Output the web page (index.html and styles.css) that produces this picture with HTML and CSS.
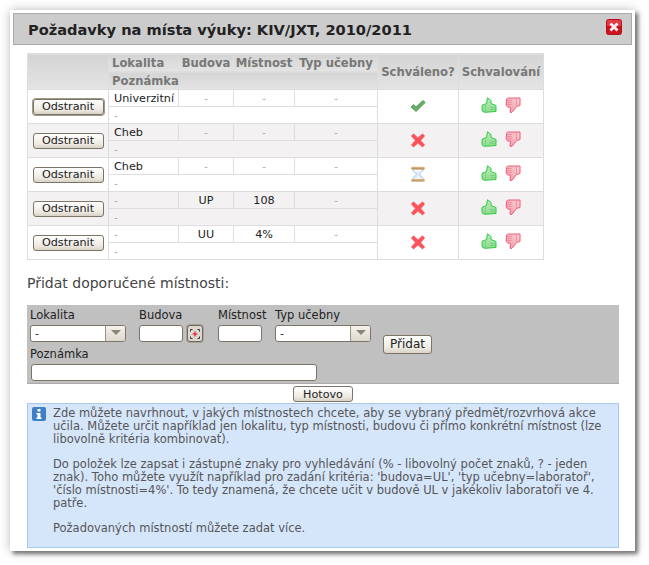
FILE: index.html
```html
<!DOCTYPE html>
<html lang="cs">
<head>
<meta charset="utf-8">
<title>Požadavky na místa výuky</title>
<link rel="stylesheet" href="styles.css">
</head>
<body>
<svg class="defs" width="0" height="0" aria-hidden="true">
  <defs>
    <linearGradient id="gUp" x1="0" y1="0" x2="0" y2="1"><stop offset="0" stop-color="#bfe8bf"/><stop offset="1" stop-color="#8edb8e"/></linearGradient>
    <linearGradient id="gDown" x1="1" y1="0" x2="0" y2="1"><stop offset="0" stop-color="#f8d0d4"/><stop offset="1" stop-color="#f29aa8"/></linearGradient>
    <linearGradient id="gSand" x1="0" y1="0" x2="0" y2="1"><stop offset="0" stop-color="#e6bd88"/><stop offset="1" stop-color="#b4834a"/></linearGradient>
    <symbol id="up" viewBox="0 0 16 16">
      <path d="M1 9Q1 7.500 3 7.500L5.500 6.500 6.500 .8 10 3.500V6.500L15 8.500V14.500L4 15.300Q1 15 1 13z" fill="url(#gUp)" stroke="#2fcc40" stroke-linejoin="round"/>
      <path d="M4.500 8V14.500M9 10.500h6M9 12.500h6" stroke="#5fd06a" stroke-width=".7" fill="none"/>
    </symbol>
    <symbol id="down" viewBox="0 0 16 16">
      <path d="M1.200 8.500L1.500 2.500Q1.700 1 3.500 1H15V8.500L11.500 9.500 7 15.300H5L5.500 10.300 2.500 9.800z" fill="url(#gDown)" stroke="#f4587a" stroke-linejoin="round"/>
      <path d="M11.500 1.500V9M1.800 3.500h5M1.600 5.500h5M1.500 7.500h5" stroke="#f07c90" stroke-width=".7" fill="none"/>
    </symbol>
    <symbol id="no" viewBox="0 0 16 16">
      <path d="M3.500 1.500L8 5.500 12.500 1.500 15 4 11 8.500 15 13 12.500 15.200 8 11.500 3.500 15.200 1 13 5 8.500 1 4z" fill="#f9525a" stroke="#fb9da0" stroke-width=".5"/>
    </symbol>
    <symbol id="yes" viewBox="0 0 16 16">
      <path d="M1 9L3.500 6.500 6 9 13 2.500 15.200 4.500 6 13.500z" fill="#68b068" stroke="#478c47" stroke-width=".8" stroke-linejoin="round"/>
    </symbol>
    <symbol id="wait" viewBox="0 0 16 16">
      <path d="M2.500 2.500h11C13.500 6 9.500 6.500 9.500 8.300s4 2.200 4 5.500h-11C2.500 10.500 6.500 10 6.500 8.300S2.500 6 2.500 2.500z" fill="#e4effb" stroke="#90b6e0" stroke-width=".8"/>
      <path d="M5 4.500h6M6.800 12h2.400" stroke="#fff" stroke-width="1.500"/>
      <rect x="1.200" y=".8" width="13.600" height="2.600" rx="1.200" fill="url(#gSand)"/>
      <rect x="1.200" y="13" width="13.600" height="2.600" rx="1.200" fill="url(#gSand)"/>
    </symbol>
  </defs>
</svg>

<main class="dialog">
  <header class="titlebar">
    <h1 class="title">Požadavky na místa výuky: KIV/JXT, 2010/2011</h1>
    <svg class="close" viewBox="0 0 16 16" width="16" height="16" role="img" aria-label="Zavřít">
      <rect x=".5" y=".5" width="15" height="15" rx="2" fill="#d0121f" stroke="#b01018"/>
      <rect x="1" y="1" width="14" height="6" rx="1" fill="#ee5560" opacity=".6"/>
      <path d="M4.500 4.500l7 7M11.500 4.500l-7 7" stroke="#f6f0f0" stroke-width="2.800"/>
    </svg>
  </header>

  <div class="content">
    <table class="grid">
      <colgroup><col class="c1"><col class="c2"><col class="c3"><col class="c4"><col class="c5"><col class="c6"><col class="c7"></colgroup>
      <thead>
        <tr>
          <th rowspan="2"></th>
          <th class="left">Lokalita</th><th>Budova</th><th>Místnost</th><th>Typ učebny</th>
          <th rowspan="2">Schváleno?</th><th rowspan="2">Schvalování</th>
        </tr>
        <tr><th class="left" colspan="4">Poznámka</th></tr>
      </thead>
      <tbody>
        <tr>
          <td rowspan="2" class="action"><button class="btn focused">Odstranit</button></td>
          <td class="left">Univerzitní</td><td class="nil">-</td><td class="nil">-</td><td class="nil">-</td>
          <td rowspan="2" class="state"><svg class="ic"><use href="#yes"/></svg></td>
          <td rowspan="2" class="vote"><svg class="ic"><use href="#up"/></svg><svg class="ic"><use href="#down"/></svg></td>
        </tr>
        <tr><td colspan="4" class="left nil">-</td></tr>
        <tr class="alt">
          <td rowspan="2" class="action"><button class="btn">Odstranit</button></td>
          <td class="left">Cheb</td><td class="nil">-</td><td class="nil">-</td><td class="nil">-</td>
          <td rowspan="2" class="state"><svg class="ic"><use href="#no"/></svg></td>
          <td rowspan="2" class="vote"><svg class="ic"><use href="#up"/></svg><svg class="ic"><use href="#down"/></svg></td>
        </tr>
        <tr class="alt"><td colspan="4" class="left nil">-</td></tr>
        <tr>
          <td rowspan="2" class="action"><button class="btn">Odstranit</button></td>
          <td class="left">Cheb</td><td class="nil">-</td><td class="nil">-</td><td class="nil">-</td>
          <td rowspan="2" class="state"><svg class="ic"><use href="#wait"/></svg></td>
          <td rowspan="2" class="vote"><svg class="ic"><use href="#up"/></svg><svg class="ic"><use href="#down"/></svg></td>
        </tr>
        <tr><td colspan="4" class="left nil">-</td></tr>
        <tr class="alt">
          <td rowspan="2" class="action"><button class="btn">Odstranit</button></td>
          <td class="left nil">-</td><td>UP</td><td>108</td><td class="nil">-</td>
          <td rowspan="2" class="state"><svg class="ic"><use href="#no"/></svg></td>
          <td rowspan="2" class="vote"><svg class="ic"><use href="#up"/></svg><svg class="ic"><use href="#down"/></svg></td>
        </tr>
        <tr class="alt"><td colspan="4" class="left nil">-</td></tr>
        <tr>
          <td rowspan="2" class="action"><button class="btn">Odstranit</button></td>
          <td class="left nil">-</td><td>UU</td><td>4%</td><td class="nil">-</td>
          <td rowspan="2" class="state"><svg class="ic"><use href="#no"/></svg></td>
          <td rowspan="2" class="vote"><svg class="ic"><use href="#up"/></svg><svg class="ic"><use href="#down"/></svg></td>
        </tr>
        <tr><td colspan="4" class="left nil">-</td></tr>
      </tbody>
    </table>

    <h2 class="subtitle">Přidat doporučené místnosti:</h2>

    <form class="addform">
      <div class="fields">
        <div class="field f-loc">
          <label>Lokalita</label>
          <div class="combo w-loc"><span class="combo-val">-</span><span class="combo-btn"></span></div>
        </div>
        <div class="field f-bud">
          <label>Budova</label>
          <div class="with-pick">
            <div class="input w-short"></div>
            <span class="pick"><svg viewBox="0 0 14 14" width="14" height="14"><path d="M2.500 4.500V2.500H4.500M9.500 2.500h2v2M11.500 9.500v2h-2M4.500 11.500h-2v-2" fill="none" stroke="#333"/><path d="M7 4.500v5M4.500 7h5" stroke="#e01020" stroke-width="1.200"/></svg></span>
          </div>
        </div>
        <div class="field f-room">
          <label>Místnost</label>
          <div class="input w-short"></div>
        </div>
        <div class="field f-type">
          <label>Typ učebny</label>
          <div class="combo w-type"><span class="combo-val">-</span><span class="combo-btn"></span></div>
        </div>
        <button type="button" class="btn add">Přidat</button>
      </div>
      <div class="field f-note">
        <label>Poznámka</label>
        <div class="input w-note"></div>
      </div>
    </form>

    <div class="done"><button class="btn done-btn">Hotovo</button></div>

    <section class="info">
      <svg class="info-ic" viewBox="0 0 14 14" width="14" height="14" aria-hidden="true">
        <rect width="14" height="14" rx="2" fill="#3f80c4"/>
        <rect x="5.500" y="2" width="3" height="2.500" fill="#fff"/>
        <path d="M4.500 6H8.500V10.500H9.500V12H4.500V10.500H5.500V7.500H4.500z" fill="#fff"/>
      </svg>
      <div class="info-text">
        <p>Zde můžete navrhnout, v jakých místnostech chcete, aby se vybraný předmět/rozvrhová akce<br>učila. Můžete určit například jen lokalitu, typ místnosti, budovu či přímo konkrétní místnost (lze<br>libovolně kritéria kombinovat).</p>
        <p>Do položek lze zapsat i zástupné znaky pro vyhledávání (% - libovolný počet znaků, ? - jeden<br>znak). Toho můžete využít například pro zadání kritéria: 'budova=UL', 'typ učebny=laboratoř',<br>'číslo místnosti=4%'. To tedy znamená, že chcete učit v budově UL v jakékoliv laboratoři ve 4.<br>patře.</p>
        <p>Požadovaných místností můžete zadat více.</p>
      </div>
    </section>
  </div>
</main>
</body>
</html>
```
FILE: styles.css
```css
* { box-sizing: border-box; }
html, body { margin: 0; padding: 0; background: #fff; }
body {
  width: 649px;
  height: 565px;
  overflow: hidden;
  padding: 10px 0 0 10px;
  font-family: "DejaVu Sans", Verdana, sans-serif;
  font-size: 11px;
  color: #222;
}
.defs { position: absolute; }

.dialog {
  width: 625px;
  height: 541px;
  padding: 3px;
  background: #fff;
  box-shadow: 3px 3px 4px #777, 0 0 10px rgba(0, 0, 0, .25);
}
.titlebar {
  height: 32px;
  display: flex;
  align-items: center;
  justify-content: space-between;
  padding: 1px 0 0 14px;
  background: #ccc;
  border: 1px solid #aaa;
}
.title { margin: 0; font-size: 14.600px; font-weight: bold; color: #222; }
.close { margin: -5px 9px 0 0; }

.content { padding: 8px 13px 0 14px; }

.grid {
  width: 516px;
  table-layout: fixed;
  border-collapse: collapse;
  font-size: 11.200px;
}
.c1 { width: 81px; }
.c2 { width: 70px; }
.c3 { width: 55px; }
.c4 { width: 61px; }
.c5 { width: 83px; }
.c6 { width: 81px; }
.c7 { width: 85px; }
.grid th, .grid td {
  border: 1px solid #ddd;
  padding: 0 3px;
  height: 17px;
  line-height: 14px;
  text-align: center;
  white-space: nowrap;
  overflow: hidden;
}
.grid td { padding: 1px 3px 0; }
.grid th {
  height: 18px;
  background: linear-gradient(#d4d4d4, #e4e4e4);
  color: #777;
  font-weight: bold;
  font-size: 11.600px;
  padding: 0 1px;
}
.grid th.left { text-align: left; padding-left: 3px; }
.grid td.left { text-align: left; padding-left: 5px; }
.grid .nil { color: #aaa; font-size: 10px; }
.alt td { background: #f3f1f2; }
.grid td.action { padding: 0; }
.grid td.state, .grid td.vote { padding: 0; }
.ic { width: 16px; height: 16px; display: inline-block; vertical-align: middle; }
.state .ic { margin-bottom: 1px; }
.vote .ic { margin-bottom: 4px; }
.vote .ic + .ic { margin-left: 8px; }

.btn {
  font-family: inherit;
  font-size: 11.200px;
  color: #222;
  height: 16px;
  padding: 0 9px;
  line-height: 13px;
  border: 1px solid #7d7468;
  border-radius: 3px;
  background: linear-gradient(#fff, #eeeae2 70%, #d8d2c6);
}
.action .btn { width: 71px; display: block; margin: 0 auto; padding: 0; }
.btn.focused { box-shadow: 0 0 0 1px #a09888; }

.subtitle {
  margin: 15px 0 13px;
  font-size: 14px;
  line-height: 17px;
  font-weight: normal;
  color: #444;
}

.addform {
  width: 592px;
  height: 79px;
  background: silver;
  padding: 3px;
  border-bottom: 1px solid #aaa;
}
.fields { display: flex; align-items: flex-start; }
.field label { display: block; height: 14px; line-height: 14px; margin-bottom: 3px; color: #222; font-size: 11.500px; }
.f-note { margin-top: 5px; }
.f-loc { width: 109px; }
.f-bud { width: 79px; }
.f-room { width: 57px; }
.f-type { width: 108px; }
.with-pick { display: flex; align-items: center; gap: 4px; }

.input, .combo {
  height: 17px;
  background: #fff;
  border: 1px solid #7d7468;
  border-radius: 3px;
}
.w-short { width: 44px; }
.w-note { width: 286px; margin-left: 1px; }
.w-loc { width: 96px; }
.w-type { width: 96px; }
.combo { display: flex; align-items: stretch; overflow: hidden; }
.combo-val { flex: 1; padding-left: 4px; line-height: 15px; }
.combo-btn {
  width: 20px;
  border-left: 1px solid #9a9488;
  background: linear-gradient(#f4f2ec, #dcd8ce);
  display: flex;
  align-items: center;
  justify-content: center;
}
.combo-btn::before {
  content: "";
  width: 0;
  height: 0;
  margin-top: -2px;
  border-left: 5px solid transparent;
  border-right: 5px solid transparent;
  border-top: 5px solid #8a8478;
}
.pick {
  width: 16px;
  height: 17px;
  display: flex;
  align-items: center;
  justify-content: center;
  background: #dcd8d0;
  border: 1px solid #6f675c;
  border-radius: 3px;
  box-shadow: 0 0 0 1px #a8a49c;
}
.add { height: 19px; margin: 27px 0 -12px; width: 49px; padding: 0; font-size: 12px; }

.done { display: flex; justify-content: center; width: 592px; padding: 2px 0 1px; }
.done-btn { width: 60px; padding: 0; }

.info {
  width: 592px;
  height: 145px;
  display: flex;
  background: #d5e6fb;
  border: 1px solid #a8c8ec;
  padding: 3px 4px 0 4px;
  color: #555;
}
.info-ic { flex: none; margin-right: 7px; }
.info-text { line-height: 13px; font-size: 11.500px; white-space: nowrap; }
.info-text p { margin: 0 0 12px; }
```
